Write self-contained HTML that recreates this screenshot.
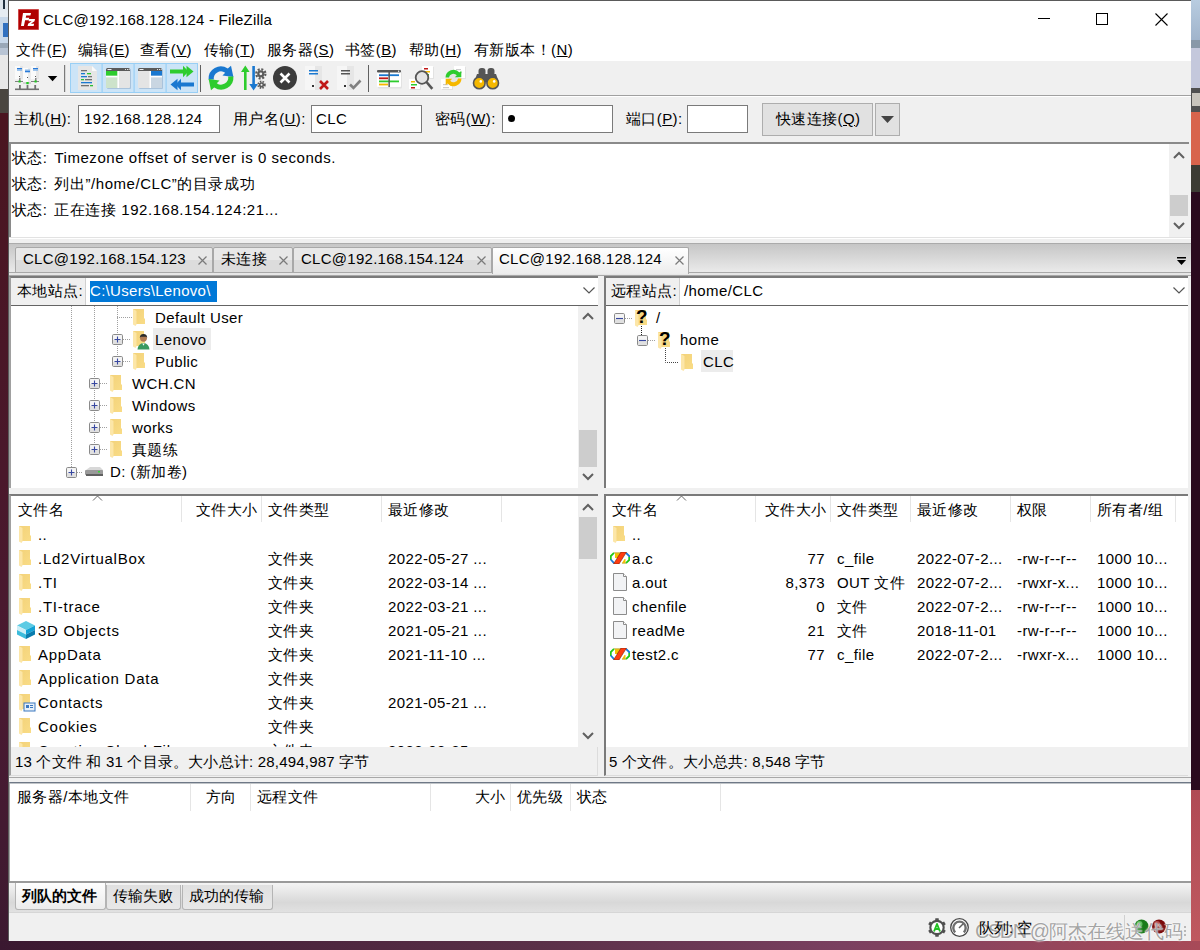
<!DOCTYPE html>
<html><head><meta charset="utf-8">
<style>
*{box-sizing:border-box;margin:0;padding:0}
html,body{width:1200px;height:950px;overflow:hidden;background:#2a0a1e;font-family:"Liberation Sans",sans-serif;font-size:15px;color:#000}
.a{position:absolute}
.t{position:absolute;white-space:nowrap;line-height:18px;letter-spacing:0.4px}
.u{text-decoration:underline}
.lg{margin-left:7px;letter-spacing:0.55px}
#win{position:absolute;left:0;top:0;width:1200px;height:950px}
.sunk{position:absolute;background:#fff;border-top:2px solid #8a8a8a;border-left:2px solid #8a8a8a}
.sb{position:absolute;background:#f0f0f0}
.tab{position:absolute;top:247px;height:26px;border:1px solid #a8a8a8;border-radius:2px 2px 0 0;background:linear-gradient(#e8e8e8 0,#e8e8e8 50%,#dcdcdc 50%,#dcdcdc 100%)}
.tab.act{top:247px;height:27px;border-bottom:none;background:linear-gradient(#ffffff 0,#f6f6f6 50%,#ececec 100%)}
.tt{letter-spacing:0.27px}
.x{position:absolute;top:256px;width:9px;height:9px}
.btab{position:absolute;top:885px;height:25px;border:1px solid #b4b4b4;border-top:none;border-radius:0 0 3px 3px;background:linear-gradient(#e0e0e0,#e8e8e8)}
.btab.act{top:883px;height:27px;background:linear-gradient(#fefefe,#ececec)}
.hdrsep{position:absolute;width:1px;background:#e5e5e5}
</style></head><body>
<!-- desktop strips -->
<div class="a" style="left:0;top:0;width:8px;height:950px;background:linear-gradient(#4a1520 120px,#4a1a32 700px,#3c1a30 950px)"></div>
<div class="a" style="left:0;top:0;width:8px;height:10px;background:#dfe6ee"></div>
<div class="a" style="left:3px;top:0;width:2px;height:9px;background:#203040"></div>
<div class="a" style="left:0;top:10px;width:8px;height:7px;background:#e6ecf2"></div>
<div class="a" style="left:0;top:17px;width:8px;height:26px;background:#c8d8ea"></div>
<div class="a" style="left:3px;top:23px;width:5px;height:14px;background:#3070c0"></div>
<div class="a" style="left:0;top:43px;width:8px;height:5px;background:#9aa8b8"></div>
<div class="a" style="left:0;top:48px;width:8px;height:7px;background:#b8c4d4"></div>
<div class="a" style="left:0;top:55px;width:8px;height:34px;background:#e8e8e8"></div>
<div class="a" style="left:0;top:89px;width:8px;height:24px;background:#4a4640"></div>

<div class="a" style="left:1191px;top:0;width:9px;height:40px;background:linear-gradient(#b8cce0,#a0b4cc)"></div>
<div class="a" style="left:1191px;top:40px;width:9px;height:8px;background:#8898a8"></div>
<div class="a" style="left:1191px;top:48px;width:9px;height:40px;background:#c4c8dc"></div>
<div class="a" style="left:1191px;top:88px;width:9px;height:24px;background:#505050"></div>
<div class="a" style="left:1192px;top:93px;width:8px;height:13px;background:#c8c4bc"></div>
<div class="a" style="left:1191px;top:112px;width:9px;height:53px;background:#d8644c"></div>
<div class="a" style="left:1191px;top:165px;width:9px;height:27px;background:#3c3c34"></div>
<div class="a" style="left:1191px;top:790px;width:9px;height:161px;background:linear-gradient(#b04a55,#c05a60)"></div>
<div class="a" style="left:0;top:941px;width:1200px;height:9px;background:linear-gradient(90deg,#3a1830,#5a3048 45%,#7a4060 70%,#a84a58)"></div>

<div id="win">
 <div class="a" style="left:8px;top:0;width:1183px;height:941px;background:#f0f0f0;border-left:1px solid #5a5a5a;border-top:1px solid #5a5a5a"></div>
 <!-- title + menu (white) -->
 <div class="a" style="left:9px;top:1px;width:1182px;height:60px;background:#fff"></div>
 <svg class="a" style="left:18px;top:9px" width="21" height="21" viewBox="0 0 21 21">
  <rect x="0.5" y="0.5" width="20" height="20" fill="#b00000" stroke="#c01010" stroke-dasharray="1 1"/>
  <path d="M5 4h8l-.6 2.6H8.2l-.5 2.2h3.6l-.6 2.5H7.1L5.9 17H3z" fill="#fff"/>
  <path d="M11 10h6l-.5 2.2-3.6 2.6h3.2L15.6 17H9.6l.5-2.2 3.6-2.6H10.6z" fill="#fff"/>
 </svg>
 <div class="t" style="left:43px;top:11px;letter-spacing:0.2px">CLC@192.168.128.124 - FileZilla</div>
 <div class="a" style="left:1038px;top:18px;width:12px;height:1px;background:#000"></div>
 <div class="a" style="left:1096px;top:13px;width:12px;height:12px;border:1px solid #000"></div>
 <svg class="a" style="left:1155px;top:13px" width="13" height="13"><path d="M0.5 0.5L12.5 12.5M12.5 0.5L0.5 12.5" stroke="#000" stroke-width="1.1"/></svg>

 <div class="t" style="left:16px;top:41px">文件(<span class="u">F</span>)</div>
 <div class="t" style="left:78px;top:41px">编辑(<span class="u">E</span>)</div>
 <div class="t" style="left:140px;top:41px">查看(<span class="u">V</span>)</div>
 <div class="t" style="left:204px;top:41px">传输(<span class="u">T</span>)</div>
 <div class="t" style="left:267px;top:41px">服务器(<span class="u">S</span>)</div>
 <div class="t" style="left:345px;top:41px">书签(<span class="u">B</span>)</div>
 <div class="t" style="left:409px;top:41px">帮助(<span class="u">H</span>)</div>
 <div class="t" style="left:474px;top:41px">有新版本！(<span class="u">N</span>)</div>

 <!-- toolbar -->
 <div class="a" style="left:9px;top:95px;width:1182px;height:1px;background:#a0a0a0"></div>
 <div class="a" style="left:9px;top:96px;width:1182px;height:1px;background:#fff"></div>
 <svg class="a" style="left:0;top:0" width="520" height="100" viewBox="0 0 520 100">
  <!-- server manager -->
  <g>
   <rect x="15" y="66" width="8" height="13" fill="#fafafa"/><rect x="20" y="66" width="3" height="13" fill="#e6e6e6"/>
   <rect x="31" y="66" width="8" height="13" fill="#fafafa"/><rect x="36" y="66" width="3" height="13" fill="#e6e6e6"/>
   <rect x="23" y="68" width="8" height="15" fill="#fcfcfc"/><rect x="28" y="68" width="3" height="15" fill="#ececec"/>
   <rect x="17" y="68" width="5" height="1.4" fill="#2a7ad8"/><rect x="17" y="69.4" width="5" height="1.4" fill="#8ab8e8"/>
   <rect x="33" y="68" width="5" height="1.4" fill="#2a7ad8"/><rect x="33" y="69.4" width="5" height="1.4" fill="#8ab8e8"/>
   <rect x="25" y="69.5" width="5" height="1.4" fill="#8ab8e8"/><rect x="25" y="70.9" width="5" height="1.4" fill="#2a7ad8"/>
   <rect x="19" y="76" width="1" height="1" fill="#555"/><rect x="35" y="76" width="1" height="1" fill="#555"/><rect x="27" y="77" width="1" height="1" fill="#555"/>
   <rect x="19" y="78" width="1.5" height="3" fill="#888"/><rect x="35" y="78" width="1.5" height="3" fill="#888"/>
   <rect x="15" y="81" width="8" height="1" fill="#808080"/><rect x="31" y="81" width="8" height="1" fill="#808080"/><rect x="23" y="82.5" width="8" height="1" fill="#b0b0b0"/>
   <rect x="18.5" y="80.5" width="2.2" height="2" fill="#22cc22"/><rect x="34.5" y="80.5" width="2.2" height="2" fill="#22cc22"/><rect x="26.3" y="82" width="2.4" height="2.2" fill="#22cc22"/>
   <rect x="19" y="85" width="1.8" height="4" fill="#707070"/><rect x="26.6" y="85" width="1.8" height="4" fill="#707070"/><rect x="34.3" y="85" width="1.8" height="4" fill="#707070"/>
   <rect x="15" y="88.5" width="24" height="1.6" fill="#707070"/>
  </g>
  <path d="M47.8 76h9.5l-4.75 5.3z" fill="#000"/>
  <rect x="64" y="65" width="1.2" height="27" fill="#7a7a7a"/>
  <!-- toggle group -->
  <rect x="70.5" y="63.5" width="127" height="29" fill="#cce4f7" stroke="#99cff5"/>
  <rect x="101.5" y="64" width="1.2" height="28" fill="#99cff5"/>
  <rect x="133.5" y="64" width="1.2" height="28" fill="#99cff5"/>
  <rect x="165.5" y="64" width="1.2" height="28" fill="#99cff5"/>
  <!-- log doc -->
  <path d="M78 66h14l5 5v19H78z" fill="#e6e6e6"/><path d="M92 66v5h5z" fill="#fafafa"/>
  <rect x="81" y="70" width="6" height="1.3" fill="#707070"/>
  <rect x="81" y="73" width="4" height="1.3" fill="#1a78d0"/><rect x="87" y="73" width="4" height="1.3" fill="#2ec02e"/>
  <rect x="81" y="76" width="6" height="1.3" fill="#1a78d0"/><rect x="88" y="76" width="4" height="1.3" fill="#707070"/>
  <rect x="81" y="79" width="3" height="1.3" fill="#2ec02e"/><rect x="85" y="79" width="7" height="1.3" fill="#707070"/>
  <rect x="81" y="82" width="11" height="1.3" fill="#1a78d0"/>
  <rect x="81" y="85" width="8" height="1.3" fill="#707070"/><rect x="90" y="85" width="3" height="1.3" fill="#2ec02e"/>
  <!-- local tree icon -->
  <rect x="107" y="69" width="24" height="20" rx="1" fill="#a9c3dc"/>
  <rect x="106" y="68" width="24" height="20" rx="1" fill="#e4e4e4"/>
  <path d="M106 71V69.5a1.5 1.5 0 0 1 1.5-1.5h21a1.5 1.5 0 0 1 1.5 1.5V71z" fill="#5a5a5a"/>
  <rect x="107.5" y="69" width="4" height="0.9" fill="#fff"/><rect x="125" y="69" width="0.9" height="0.9" fill="#fff"/><rect x="127" y="69" width="0.9" height="0.9" fill="#fff"/><rect x="128.7" y="69" width="0.9" height="0.9" fill="#fff"/>
  <rect x="106" y="71" width="11.5" height="4.8" fill="#2ecc2e"/>
  <rect x="106" y="77.3" width="11.5" height="10.7" fill="#cde3cb"/>
  <rect x="106" y="75.8" width="11.5" height="1.5" fill="#fff"/>
  <rect x="117.5" y="71" width="1.5" height="17" fill="#fff"/>
  <!-- remote tree icon -->
  <rect x="139" y="69" width="24" height="20" rx="1" fill="#a9c3dc"/>
  <rect x="138" y="68" width="24" height="20" rx="1" fill="#e4e4e4"/>
  <path d="M138 71V69.5a1.5 1.5 0 0 1 1.5-1.5h21a1.5 1.5 0 0 1 1.5 1.5V71z" fill="#5a5a5a"/>
  <rect x="139.5" y="69" width="4" height="0.9" fill="#fff"/><rect x="157" y="69" width="0.9" height="0.9" fill="#fff"/><rect x="159" y="69" width="0.9" height="0.9" fill="#fff"/><rect x="160.7" y="69" width="0.9" height="0.9" fill="#fff"/>
  <rect x="151" y="71" width="11" height="4.8" fill="#1a78d0"/>
  <rect x="151" y="77.3" width="11" height="10.7" fill="#c9d6e2"/>
  <rect x="151" y="75.8" width="11" height="1.5" fill="#fff"/>
  <rect x="149.5" y="71" width="1.5" height="17" fill="#fff"/>
  <!-- queue arrows -->
  <path d="M170 69.5h13v-3.8l5.5 5.8-5.5 5.8v-3.8h-13z" fill="#2ecc2e"/>
  <path d="M186.5 65.7l7 5.8-7 5.8z" fill="#2ecc2e"/>
  <path d="M194 82.5h-13v-3.8l-5.5 5.8 5.5 5.8v-3.8h13z" fill="#1a78d0"/>
  <path d="M177.5 78.7l-7 5.8 7 5.8z" fill="#1a78d0"/>
  <rect x="200" y="65" width="1" height="27" fill="#606060"/>
  <!-- refresh -->
  <path d="M208.6 79.5A12.2 12.2 0 0 1 227.8 68.6L231 65.8l2.4 11.2-10.9-1.4 2.7-2.8A7.2 7.2 0 0 0 213.8 79.5z" fill="#1a78d0"/>
  <path d="M233.4 76.5A12.2 12.2 0 0 1 214.2 87.4L211 90.2l-2.4-11.2 10.9 1.4-2.7 2.8A7.2 7.2 0 0 0 228.2 76.5z" fill="#2ecc2e"/>
  <!-- process queue -->
  <path d="M244 90V72h-3l4.3-6.5 4.3 6.5h-3v18z" fill="#2ecc2e"/>
  <path d="M252.3 66v18h-3l4.3 6.5 4.3-6.5h-3V66z" fill="#1a78d0"/>
  <circle cx="260.8" cy="73.8" r="4.6" fill="none" stroke="#5a5a5a" stroke-width="2.2" stroke-dasharray="2 1.6"/>
  <circle cx="260.8" cy="73.8" r="3.6" fill="#5a5a5a"/><circle cx="260.8" cy="73.8" r="1.4" fill="#f0f0f0"/>
  <circle cx="261.5" cy="84.8" r="3.3" fill="none" stroke="#5a5a5a" stroke-width="1.8" stroke-dasharray="1.5 1.2"/>
  <circle cx="261.5" cy="84.8" r="2.6" fill="#5a5a5a"/><circle cx="261.5" cy="84.8" r="1" fill="#f0f0f0"/>
  <!-- cancel -->
  <circle cx="285" cy="78" r="12" fill="#3c3c3c"/>
  <path d="M280.5 73.5l9 9M289.5 73.5l-9 9" stroke="#fff" stroke-width="2.6"/>
  <!-- disconnect -->
  <rect x="305" y="66" width="17" height="24" fill="#f6f6f6"/><rect x="315" y="66" width="7" height="24" fill="#e6e6e6"/>
  <rect x="309" y="70" width="9" height="1.5" fill="#1a78d0"/><rect x="309" y="73" width="9" height="1.5" fill="#1a78d0"/>
  <rect x="312" y="85" width="2" height="2" fill="#333"/>
  <path d="M320 81l8 8M328 81l-8 8" stroke="#c01818" stroke-width="2.6"/>
  <!-- reconnect -->
  <rect x="337" y="66" width="17" height="24" fill="#f6f6f6"/><rect x="347" y="66" width="7" height="24" fill="#e6e6e6"/>
  <rect x="341" y="70" width="9" height="1.5" fill="#555"/><rect x="341" y="73" width="9" height="1.5" fill="#555"/>
  <rect x="344" y="85" width="2" height="2" fill="#333"/>
  <path d="M350 84.5l3.5 3.5 7-7.5" fill="none" stroke="#808080" stroke-width="2.6"/>
  <rect x="368" y="65" width="1" height="27" fill="#606060"/>
  <!-- filter -->
  <rect x="378" y="71.5" width="24" height="17" rx="1" fill="#d8d8d8" opacity=".6"/>
  <rect x="377" y="70" width="24" height="17" rx="1" fill="#fff"/>
  <rect x="377" y="70" width="24" height="2.4" rx="1" fill="#555"/><rect x="398" y="70.6" width="1.2" height="1.2" fill="#fff"/>
  <rect x="379" y="74.3" width="20" height="1.8" fill="#1a78d0"/>
  <rect x="379" y="77.4" width="9" height="1.8" fill="#c01818"/>
  <rect x="379" y="80.5" width="20" height="1.8" fill="#2ecc2e"/>
  <rect x="379" y="83.6" width="9" height="1.8" fill="#f5b800"/>
  <rect x="388.4" y="72" width="1.5" height="15" fill="#555"/>
  <!-- search -->
  <rect x="423" y="67" width="11" height="12" fill="#d8d8d8" opacity=".6"/>
  <rect x="422" y="66" width="11" height="12" fill="#fff"/>
  <rect x="424" y="68" width="4" height="1.5" fill="#c01818"/><rect x="424" y="71" width="6" height="1.5" fill="#f5b800"/><rect x="424" y="74" width="5" height="1.5" fill="#2ecc2e"/>
  <rect x="410" y="80" width="11" height="10" fill="#d8d8d8" opacity=".6"/>
  <rect x="409" y="79" width="11" height="10" fill="#fff"/>
  <rect x="411" y="81" width="4" height="1.5" fill="#f5b800"/><rect x="411" y="84" width="6" height="1.5" fill="#2ecc2e"/><rect x="411" y="87" width="4" height="1.5" fill="#c01818"/>
  <circle cx="422" cy="77.5" r="6.3" fill="#e4e4e4" stroke="#555" stroke-width="1.8"/>
  <path d="M426.5 82l5.8 6.8" stroke="#555" stroke-width="2.6"/>
  <!-- sync -->
  <rect x="455" y="67" width="11" height="12" fill="#d8d8d8" opacity=".6"/>
  <rect x="454" y="66" width="11" height="12" fill="#fff"/>
  <rect x="456" y="69" width="5" height="1.2" fill="#ccc"/><rect x="456" y="72" width="6" height="1.2" fill="#ccc"/>
  <rect x="442" y="80" width="11" height="10" fill="#d8d8d8" opacity=".6"/>
  <rect x="441" y="79" width="11" height="10" fill="#fff"/>
  <rect x="443" y="84" width="5" height="1.2" fill="#ccc"/><rect x="443" y="87" width="6" height="1.2" fill="#ccc"/>
  <circle cx="453.5" cy="78" r="5" fill="#e4e4e4"/>
  <path d="M445.5 77.5a8 8 0 0 1 14-5l1.8-1.8v6.5h-6.5l2-2a4.6 4.6 0 0 0-7.9 2.3z" fill="#2ecc2e"/>
  <path d="M461.5 78.5a8 8 0 0 1-14 5l-1.8 1.8v-6.5h6.5l-2 2a4.6 4.6 0 0 0 7.9-2.3z" fill="#f5b800"/>
  <!-- binoculars -->
  <rect x="478.5" y="68" width="7" height="8" rx="3" fill="#555"/>
  <rect x="487.5" y="68" width="7" height="8" rx="3" fill="#555"/>
  <path d="M477 74h19l3 8.5h-25z" fill="#555"/>
  <circle cx="479.3" cy="83" r="5.8" fill="#f5b800" stroke="#555" stroke-width="1.6"/>
  <circle cx="492.7" cy="83" r="5.8" fill="#f5b800" stroke="#555" stroke-width="1.6"/>
  <circle cx="480.8" cy="81.4" r="1.3" fill="#fff"/><circle cx="494.2" cy="81.4" r="1.3" fill="#fff"/>
 </svg>


 <!-- quickconnect -->
 <div class="t" style="left:14px;top:110px">主机(<span class="u">H</span>):</div>
 <div class="a" style="left:78px;top:105px;width:142px;height:28px;background:#fff;border:1px solid #7a7a7a"></div>
 <div class="t" style="left:84px;top:110px">192.168.128.124</div>
 <div class="t" style="left:233px;top:110px">用户名(<span class="u">U</span>):</div>
 <div class="a" style="left:311px;top:105px;width:111px;height:28px;background:#fff;border:1px solid #7a7a7a"></div>
 <div class="t" style="left:316px;top:110px">CLC</div>
 <div class="t" style="left:435px;top:110px">密码(<span class="u">W</span>):</div>
 <div class="a" style="left:502px;top:105px;width:111px;height:28px;background:#fff;border:1px solid #7a7a7a"></div>
 <div class="a" style="left:508px;top:115px;width:7px;height:7px;border-radius:50%;background:#000"></div>
 <div class="t" style="left:626px;top:110px">端口(<span class="u">P</span>):</div>
 <div class="a" style="left:687px;top:105px;width:61px;height:28px;background:#fff;border:1px solid #7a7a7a"></div>
 <div class="a" style="left:762px;top:103px;width:111px;height:33px;background:#e1e1e1;border:1px solid #adadad"></div>
 <div class="t" style="left:776px;top:110px">快速连接(<span class="u">Q</span>)</div>
 <div class="a" style="left:875px;top:103px;width:25px;height:33px;background:#e1e1e1;border:1px solid #adadad"></div>
 <svg class="a" style="left:881px;top:116px" width="13" height="7"><path d="M0 0h13L6.5 7z" fill="#444"/></svg>

 <!-- log -->
 <div class="sunk" style="left:9px;top:142px;width:1180px;height:96px"></div>
 <div class="t" style="left:12px;top:149px">状态:<span class="lg">Timezone offset of server is 0 seconds.</span></div>
 <div class="t" style="left:12px;top:175px">状态:<span class="lg">列出”/home/CLC”的目录成功</span></div>
 <div class="t" style="left:12px;top:201px">状态:<span class="lg">正在连接 192.168.154.124:21...</span></div>
 <div class="sb" style="left:1169px;top:144px;width:20px;height:93px"></div>
 <div class="a" style="left:1170px;top:195px;width:18px;height:21px;background:#cdcdcd"></div>
 <svg class="a" style="left:1173px;top:151px" width="12" height="8"><path d="M1 7l5-5 5 5" fill="none" stroke="#606060" stroke-width="2"/></svg>
 <svg class="a" style="left:1173px;top:222px" width="12" height="8"><path d="M1 1l5 5 5-5" fill="none" stroke="#606060" stroke-width="2"/></svg>

 <!-- tab bar -->
 <div class="a" style="left:9px;top:244px;width:1182px;height:28px;background:linear-gradient(#c6c6c6,#eaeaea)"></div>
 <div class="a" style="left:9px;top:237px;width:1182px;height:6px;background:#efefef;border-top:1px solid #e2e2e2;box-shadow:inset 0 1px 0 #fff"></div>
 <div class="a" style="left:9px;top:243px;width:1182px;height:1px;background:#ababab"></div>
 <div class="a" style="left:9px;top:272px;width:1182px;height:1px;background:#a8a8a8"></div>
 <div class="a" style="left:9px;top:273px;width:1182px;height:3px;background:#e6e6e6;border-bottom:1px solid #a8a8a8"></div>
 <div class="tab" style="left:15px;width:198px"></div>
 <div class="t tt" style="left:23px;top:250px">CLC@192.168.154.123</div><svg class="x" style="left:198px" width="9" height="9"><path d="M0.5 0.5l8 8M8.5 0.5l-8 8" stroke="#7a7a7a" stroke-width="1.2"/></svg>
 <div class="tab" style="left:213px;width:80px"></div>
 <div class="t tt" style="left:221px;top:250px">未连接</div><svg class="x" style="left:279px" width="9" height="9"><path d="M0.5 0.5l8 8M8.5 0.5l-8 8" stroke="#7a7a7a" stroke-width="1.2"/></svg>
 <div class="tab" style="left:293px;width:199px"></div>
 <div class="t tt" style="left:301px;top:250px">CLC@192.168.154.124</div><svg class="x" style="left:477px" width="9" height="9"><path d="M0.5 0.5l8 8M8.5 0.5l-8 8" stroke="#7a7a7a" stroke-width="1.2"/></svg>
 <div class="tab act" style="left:492px;width:197px"></div>
 <div class="t tt" style="left:499px;top:250px">CLC@192.168.128.124</div><svg class="x" style="left:675px" width="9" height="9"><path d="M0.5 0.5l8 8M8.5 0.5l-8 8" stroke="#7a7a7a" stroke-width="1.2"/></svg>
 <svg class="a" style="left:1177px;top:257px" width="9" height="8"><rect x="0" y="0" width="9" height="1.5" fill="#000"/><path d="M0 3h9L4.5 8z" fill="#000"/></svg>

 <!-- local site -->
 <div class="a" style="left:9px;top:276px;width:589px;height:212px;background:#fff;border-top:2px solid #7a7a7a;border-left:2px solid #a0a0a0"></div>
 <div class="a" style="left:11px;top:278px;width:75px;height:28px;background:#f0f0f0;border-right:1px solid #d0d0d0"></div>
 <div class="a" style="left:11px;top:305px;width:587px;height:1px;background:#646464"></div>
 <div class="t" style="left:17px;top:282px">本地站点:</div>
 <div class="a" style="left:90px;top:281px;width:127px;height:21px;background:#0078d7"></div>
 <div class="t" style="left:90px;top:282px;color:#fff;letter-spacing:0.3px">C:\Users\Lenovo\</div>
 <svg class="a" style="left:583px;top:287px" width="12" height="7"><path d="M0.5 0.5l5.5 5.5 5.5-5.5" fill="none" stroke="#555" stroke-width="1.2"/></svg>
 <!-- local tree -->
 <div class="a" style="left:153px;top:328px;width:58px;height:22px;background:#ececec"></div>

 <svg width="0" height="0" style="position:absolute">
  <defs>
   <symbol id="fold" viewBox="0 0 12 17"><linearGradient id="fg" x1="0" y1="0" x2="1" y2="1"><stop offset="0" stop-color="#f3d27a"/><stop offset="1" stop-color="#f9dc86"/></linearGradient><path d="M0 0h11v9.5h1V15H0z" fill="url(#fg)"/><path d="M0 0l3.5 2v13.5l-1 1.5L0 15.5z" fill="#fce6a8"/></symbol>
   <symbol id="exp" viewBox="0 0 11 11"><rect x="0.5" y="0.5" width="10" height="10" rx="1.2" fill="#f4f4f4" stroke="#8a8a8a"/><rect x="1" y="6" width="9" height="4" fill="#e0e0e0"/><path d="M2.5 5.5h6M5.5 2.5v6" stroke="#3848a0" stroke-width="1.1"/></symbol>
   <symbol id="col" viewBox="0 0 11 11"><rect x="0.5" y="0.5" width="10" height="10" rx="1.2" fill="#f4f4f4" stroke="#8a8a8a"/><rect x="1" y="6" width="9" height="4" fill="#e0e0e0"/><path d="M2 5.5h7" stroke="#3848a0" stroke-width="1.1"/></symbol>
   <symbol id="cfile" viewBox="0 0 20 12"><path d="M4 0.8h12l3.2 3.2v4l-3.2 3.2H4L0.8 8V4z" fill="#fff"/><path d="M5 1h6L8 6H5z" fill="#f5c000"/><path d="M12 11h3.5V7h-1z" fill="#f5c000"/><path d="M0.8 8V4L4 0.8" fill="none" stroke="#22c81a" stroke-width="1.8"/><path d="M0.8 7.5L4 11.2" fill="none" stroke="#1a7ad8" stroke-width="1.8"/><path d="M16 0.8l3.2 3.2v1" fill="none" stroke="#1a7ad8" stroke-width="1.8"/><path d="M19.2 5v3L16 11.2" fill="none" stroke="#22c81a" stroke-width="1.8"/><path d="M4 0.8h7M12 11.2h4" stroke="#c8b040" stroke-width="1"/><path d="M3.5 12h5.5L16.5 0H11z" fill="#ff3c10" stroke="#702010" stroke-width="0.6"/></symbol>
   <symbol id="doc" viewBox="0 0 14 18"><path d="M0.5 0.5h10l3 3v14h-13z" fill="#f2f3f5" stroke="#8c8c8c"/><path d="M10.5 0.5v3h3" fill="#fff" stroke="#8c8c8c"/></symbol>
  </defs>
 </svg>

<svg class="a" style="left:0;top:0" width="600" height="500">
<path d="M71.5 306V467" stroke="#a0a0a0" stroke-dasharray="1 1"/>
<path d="M94.5 306V449" stroke="#a0a0a0" stroke-dasharray="1 1"/>
<path d="M117.5 306V356" stroke="#a0a0a0" stroke-dasharray="1 1"/>
<path d="M117 317.5H132" stroke="#a0a0a0" stroke-dasharray="1 1"/>
<use href="#fold" x="133" y="309" width="12" height="17"/>
<use href="#exp" x="112" y="334" width="11" height="11"/>
<path d="M123 339.5H130" stroke="#a0a0a0" stroke-dasharray="1 1"/>
<use href="#fold" x="133" y="331" width="12" height="17"/>
<use href="#exp" x="112" y="356" width="11" height="11"/>
<path d="M123 361.5H130" stroke="#a0a0a0" stroke-dasharray="1 1"/>
<use href="#fold" x="133" y="353" width="12" height="17"/>
<use href="#exp" x="89" y="378" width="11" height="11"/>
<path d="M100 383.5H107" stroke="#a0a0a0" stroke-dasharray="1 1"/>
<use href="#fold" x="110" y="375" width="12" height="17"/>
<use href="#exp" x="89" y="400" width="11" height="11"/>
<path d="M100 405.5H107" stroke="#a0a0a0" stroke-dasharray="1 1"/>
<use href="#fold" x="110" y="397" width="12" height="17"/>
<use href="#exp" x="89" y="422" width="11" height="11"/>
<path d="M100 427.5H107" stroke="#a0a0a0" stroke-dasharray="1 1"/>
<use href="#fold" x="110" y="419" width="12" height="17"/>
<use href="#exp" x="89" y="444" width="11" height="11"/>
<path d="M100 449.5H107" stroke="#a0a0a0" stroke-dasharray="1 1"/>
<use href="#fold" x="110" y="441" width="12" height="17"/>
<use href="#exp" x="66" y="467" width="11" height="11"/>
<path d="M77 472.5H83" stroke="#a0a0a0" stroke-dasharray="1 1"/>
<path d="M86 470l4-3h10l3 3v4h-17z" fill="#d8d8d8"/><rect x="85" y="470" width="18" height="5" rx="1" fill="#9a9a9a"/><rect x="86" y="474" width="17" height="2" fill="#606060"/><rect x="98" y="471" width="2" height="1.5" fill="#3ad83a"/>
<path d="M137.5 349.5a6 6.5 0 0 1 12 0z" fill="#3a9a60"/><path d="M142.3 343.5l1.2 2.2 1.2-2.2z" fill="#fff"/><circle cx="143.5" cy="338.3" r="3.4" fill="#b07a52"/><path d="M139.8 338a3.7 4 0 0 1 7.4 0l-1-1.3h-5.4z" fill="#2a2a2a"/>
</svg>
<div class="t" style="left:155px;top:309px">Default User</div>
<div class="t" style="left:155px;top:331px">Lenovo</div>
<div class="t" style="left:155px;top:353px">Public</div>
<div class="t" style="left:132px;top:375px">WCH.CN</div>
<div class="t" style="left:132px;top:397px">Windows</div>
<div class="t" style="left:132px;top:419px">works</div>
<div class="t" style="left:132px;top:441px">真题练</div>
<div class="t" style="left:110px;top:463px">D: (新加卷)</div>
 <div class="sb" style="left:578px;top:306px;width:20px;height:182px"></div>
 <div class="a" style="left:579px;top:430px;width:18px;height:37px;background:#cdcdcd"></div>
 <svg class="a" style="left:582px;top:312px" width="12" height="8"><path d="M1 7l5-5 5 5" fill="none" stroke="#606060" stroke-width="2"/></svg>
 <svg class="a" style="left:582px;top:473px" width="12" height="8"><path d="M1 1l5 5 5-5" fill="none" stroke="#606060" stroke-width="2"/></svg>

 <!-- remote site -->
 <div class="a" style="left:604px;top:276px;width:584px;height:212px;background:#fff;border-top:2px solid #7a7a7a;border-left:2px solid #7a7a7a"></div>
 <div class="a" style="left:606px;top:278px;width:74px;height:28px;background:#f0f0f0;border-right:1px solid #d0d0d0"></div>
 <div class="a" style="left:606px;top:305px;width:582px;height:1px;background:#646464"></div>
 <div class="t" style="left:611px;top:282px">远程站点:</div>
 <div class="t" style="left:684px;top:282px">/home/CLC</div>
 <svg class="a" style="left:1173px;top:287px" width="12" height="7"><path d="M0.5 0.5l5.5 5.5 5.5-5.5" fill="none" stroke="#555" stroke-width="1.2"/></svg>
<svg class="a" style="left:0;top:0" width="1200" height="500">
<path d="M625 318.5H633" stroke="#a0a0a0" stroke-dasharray="1 1"/>
<path d="M641.5 326V335" stroke="#222" stroke-dasharray="1 1"/>
<path d="M648 340.5H656" stroke="#a0a0a0" stroke-dasharray="1 1"/>
<path d="M665.5 348V362.5H678" stroke="#444" stroke-dasharray="1 1" fill="none"/>
<use href="#col" x="614" y="313" width="11" height="11"/>
<use href="#col" x="637" y="335" width="11" height="11"/>
<use href="#fold" x="635" y="310" width="12" height="17"/>
<use href="#fold" x="658" y="332" width="12" height="17"/>
<use href="#fold" x="681" y="354" width="12" height="17"/>
<text x="636" y="323" font-family="Liberation Sans" font-weight="bold" font-size="19">?</text>
<text x="659" y="345" font-family="Liberation Sans" font-weight="bold" font-size="19">?</text>
</svg>
<div class="a" style="left:701px;top:350px;width:32px;height:22px;background:#ececec"></div>
<div class="t" style="left:656px;top:309px">/</div>
<div class="t" style="left:680px;top:331px">home</div>
<div class="t" style="left:703px;top:353px">CLC</div>

 <!-- local list -->
 <div class="a" style="left:9px;top:494px;width:589px;height:253px;background:#fff;border-top:2px solid #7a7a7a;border-left:2px solid #a0a0a0"></div>
<svg class="a" style="left:0;top:0" width="600" height="760">
<use href="#fold" x="19" y="526" width="12" height="17"/>
<use href="#fold" x="19" y="550" width="12" height="17"/>
<use href="#fold" x="19" y="574" width="12" height="17"/>
<use href="#fold" x="19" y="598" width="12" height="17"/>
<path d="M17 625.5l9-4.5 9 4.5-9 4.5z" fill="#5ccbe4"/><path d="M17 625.5l9 4.5v4.5l-9-4.5z" fill="#cdeef6"/><path d="M17 630l9 4.5v4.5l-9-4.5z" fill="#3cbcdc"/><path d="M26 630l9-4.5v4.5l-9 4.5z" fill="#12a2d6"/><path d="M26 634.5l9-4.5v4.5l-9 4.5z" fill="#0a7cae"/>
<use href="#fold" x="19" y="646" width="12" height="17"/>
<use href="#fold" x="19" y="670" width="12" height="17"/>
<use href="#fold" x="19" y="694" width="12" height="17"/>
<rect x="24" y="703" width="11" height="8" fill="#e8f0f8" stroke="#3a78c0"/><rect x="26" y="705" width="3" height="3" fill="#3a78c0"/><rect x="30" y="705" width="3" height="1" fill="#3a78c0"/><rect x="30" y="707" width="3" height="1" fill="#3a78c0"/>
<use href="#fold" x="19" y="718" width="12" height="17"/>
<use href="#fold" x="19" y="742" width="12" height="17"/>
</svg>
<div class="t" style="left:18px;top:501px">文件名</div>
<svg class="a" style="left:92px;top:495px" width="11" height="6"><path d="M1 5.5l4.5-4.5 4.5 4.5" fill="none" stroke="#666" stroke-width="1"/></svg>
<div class="hdrsep" style="left:181px;top:496px;height:26px"></div>
<div class="hdrsep" style="left:261px;top:496px;height:26px"></div>
<div class="hdrsep" style="left:381px;top:496px;height:26px"></div>
<div class="hdrsep" style="left:501px;top:496px;height:26px"></div>
<div class="t" style="left:196px;top:501px">文件大小</div>
<div class="t" style="left:268px;top:501px">文件类型</div>
<div class="t" style="left:388px;top:501px">最近修改</div>
<div class="t" style="left:38px;top:526px">..</div>
<div class="t" style="left:38px;top:550px;letter-spacing:0.75px">.Ld2VirtualBox</div>
<div class="t" style="left:268px;top:550px">文件夹</div>
<div class="t" style="left:388px;top:550px">2022-05-27 ...</div>
<div class="t" style="left:38px;top:574px;letter-spacing:0.75px">.TI</div>
<div class="t" style="left:268px;top:574px">文件夹</div>
<div class="t" style="left:388px;top:574px">2022-03-14 ...</div>
<div class="t" style="left:38px;top:598px;letter-spacing:0.75px">.TI-trace</div>
<div class="t" style="left:268px;top:598px">文件夹</div>
<div class="t" style="left:388px;top:598px">2022-03-21 ...</div>
<div class="t" style="left:38px;top:622px;letter-spacing:0.75px">3D Objects</div>
<div class="t" style="left:268px;top:622px">文件夹</div>
<div class="t" style="left:388px;top:622px">2021-05-21 ...</div>
<div class="t" style="left:38px;top:646px;letter-spacing:0.75px">AppData</div>
<div class="t" style="left:268px;top:646px">文件夹</div>
<div class="t" style="left:388px;top:646px">2021-11-10 ...</div>
<div class="t" style="left:38px;top:670px;letter-spacing:0.75px">Application Data</div>
<div class="t" style="left:268px;top:670px">文件夹</div>
<div class="t" style="left:38px;top:694px;letter-spacing:0.75px">Contacts</div>
<div class="t" style="left:268px;top:694px">文件夹</div>
<div class="t" style="left:388px;top:694px">2021-05-21 ...</div>
<div class="t" style="left:38px;top:718px;letter-spacing:0.75px">Cookies</div>
<div class="t" style="left:268px;top:718px">文件夹</div>
<div class="t" style="left:38px;top:742px;letter-spacing:0.75px">Creative Cloud Files</div>
<div class="t" style="left:268px;top:742px">文件夹</div>
<div class="t" style="left:388px;top:742px">2022-03-25 ...</div>
 <div class="sb" style="left:578px;top:496px;width:20px;height:251px"></div>
 <div class="a" style="left:579px;top:517px;width:18px;height:42px;background:#cdcdcd"></div>
 <svg class="a" style="left:582px;top:503px" width="12" height="8"><path d="M1 7l5-5 5 5" fill="none" stroke="#606060" stroke-width="2"/></svg>
 <svg class="a" style="left:582px;top:732px" width="12" height="8"><path d="M1 1l5 5 5-5" fill="none" stroke="#606060" stroke-width="2"/></svg>
 <div class="a" style="left:9px;top:747px;width:589px;height:29px;background:#f0f0f0;border-left:2px solid #a0a0a0;border-right:1px solid #dcdcdc;border-bottom:1px solid #dcdcdc"></div>
 <div class="t" style="left:15px;top:753px;letter-spacing:0.2px">13 个文件 和 31 个目录。大小总计: 28,494,987 字节</div>

 <!-- remote list -->
 <div class="a" style="left:604px;top:494px;width:584px;height:253px;background:#fff;border-top:2px solid #7a7a7a;border-left:2px solid #7a7a7a"></div>
<svg class="a" style="left:0;top:0" width="1200" height="760">
<use href="#fold" x="613" y="526" width="12" height="17"/>
<use href="#cfile" x="610" y="552" width="20" height="12"/>
<use href="#doc" x="613" y="573" width="14" height="18"/>
<use href="#doc" x="613" y="597" width="14" height="18"/>
<use href="#doc" x="613" y="621" width="14" height="18"/>
<use href="#cfile" x="610" y="648" width="20" height="12"/>
</svg>
<div class="t" style="left:612px;top:501px">文件名</div>
<svg class="a" style="left:676px;top:495px" width="11" height="6"><path d="M1 5.5l4.5-4.5 4.5 4.5" fill="none" stroke="#666" stroke-width="1"/></svg>
<div class="hdrsep" style="left:755px;top:496px;height:26px"></div>
<div class="hdrsep" style="left:830px;top:496px;height:26px"></div>
<div class="hdrsep" style="left:910px;top:496px;height:26px"></div>
<div class="hdrsep" style="left:1010px;top:496px;height:26px"></div>
<div class="hdrsep" style="left:1090px;top:496px;height:26px"></div>
<div class="hdrsep" style="left:1175px;top:496px;height:26px"></div>
<div class="t" style="left:765px;top:501px">文件大小</div>
<div class="t" style="left:837px;top:501px">文件类型</div>
<div class="t" style="left:917px;top:501px">最近修改</div>
<div class="t" style="left:1017px;top:501px">权限</div>
<div class="t" style="left:1097px;top:501px">所有者/组</div>
<div class="t" style="left:632px;top:526px">..</div>
<div class="t" style="left:632px;top:550px">a.c</div>
<div class="t" style="right:375px;top:550px">77</div>
<div class="t" style="left:837px;top:550px">c_file</div>
<div class="t" style="left:917px;top:550px">2022-07-2...</div>
<div class="t" style="left:1017px;top:550px">-rw-r--r--</div>
<div class="t" style="left:1097px;top:550px">1000 10...</div>
<div class="t" style="left:632px;top:574px">a.out</div>
<div class="t" style="right:375px;top:574px">8,373</div>
<div class="t" style="left:837px;top:574px">OUT 文件</div>
<div class="t" style="left:917px;top:574px">2022-07-2...</div>
<div class="t" style="left:1017px;top:574px">-rwxr-x...</div>
<div class="t" style="left:1097px;top:574px">1000 10...</div>
<div class="t" style="left:632px;top:598px">chenfile</div>
<div class="t" style="right:375px;top:598px">0</div>
<div class="t" style="left:837px;top:598px">文件</div>
<div class="t" style="left:917px;top:598px">2022-07-2...</div>
<div class="t" style="left:1017px;top:598px">-rw-r--r--</div>
<div class="t" style="left:1097px;top:598px">1000 10...</div>
<div class="t" style="left:632px;top:622px">readMe</div>
<div class="t" style="right:375px;top:622px">21</div>
<div class="t" style="left:837px;top:622px">文件</div>
<div class="t" style="left:917px;top:622px">2018-11-01</div>
<div class="t" style="left:1017px;top:622px">-rw-r--r--</div>
<div class="t" style="left:1097px;top:622px">1000 10...</div>
<div class="t" style="left:632px;top:646px">test2.c</div>
<div class="t" style="right:375px;top:646px">77</div>
<div class="t" style="left:837px;top:646px">c_file</div>
<div class="t" style="left:917px;top:646px">2022-07-2...</div>
<div class="t" style="left:1017px;top:646px">-rwxr-x...</div>
<div class="t" style="left:1097px;top:646px">1000 10...</div>
 <div class="a" style="left:604px;top:747px;width:584px;height:29px;background:#f0f0f0;border-left:2px solid #7a7a7a;border-bottom:1px solid #dcdcdc"></div>
 <div class="t" style="left:609px;top:753px;letter-spacing:0.2px">5 个文件。大小总共: 8,548 字节</div>

 <!-- queue -->
 <div class="a" style="left:9px;top:777px;width:1182px;height:1px;background:#a8a8a8"></div>
 <div class="a" style="left:9px;top:782px;width:1182px;height:100px;background:#fff;border-top:1px solid #6e7886;border-left:1px solid #a0a0a0;box-shadow:inset 0 1px 0 #c0c4c8"></div>
 <div class="t" style="left:17px;top:788px">服务器/本地文件</div>
 <div class="hdrsep" style="left:190px;top:784px;height:27px"></div>
 <div class="t" style="left:206px;top:788px">方向</div>
 <div class="hdrsep" style="left:250px;top:784px;height:27px"></div>
 <div class="t" style="left:257px;top:788px">远程文件</div>
 <div class="hdrsep" style="left:430px;top:784px;height:27px"></div>
 <div class="t" style="left:475px;top:788px">大小</div>
 <div class="hdrsep" style="left:510px;top:784px;height:27px"></div>
 <div class="t" style="left:517px;top:788px">优先级</div>
 <div class="hdrsep" style="left:570px;top:784px;height:27px"></div>
 <div class="t" style="left:577px;top:788px">状态</div>
 <div class="hdrsep" style="left:720px;top:784px;height:27px"></div>
 <div class="a" style="left:9px;top:881px;width:1182px;height:2px;background:#9a9a9a"></div>

 <!-- bottom tabs -->
 <div class="a" style="left:9px;top:883px;width:1182px;height:30px;background:linear-gradient(#f4f4f4,#d8d8d8 65%,#e2e2e2)"></div>
 <div class="btab act" style="left:15px;width:91px"></div>
 <div class="t" style="left:22px;top:887px;font-weight:bold;letter-spacing:0">列队的文件</div>
 <div class="btab" style="left:106px;width:75px"></div>
 <div class="t" style="left:113px;top:887px;letter-spacing:0">传输失败</div>
 <div class="btab" style="left:182px;width:91px"></div>
 <div class="t" style="left:189px;top:887px;letter-spacing:0">成功的传输</div>
 <div class="a" style="left:9px;top:912px;width:1182px;height:1px;background:#d6d6d6"></div>
 <!-- status bar -->
 <div class="a" style="left:1124px;top:916px;width:1px;height:22px;background:#d0d0d0"></div>
 <svg class="a" style="left:920px;top:912px" width="280" height="38" viewBox="920 912 280 38">
  <path d="M933.17 920.82 L935.17 920.02 L935.34 918.35 L938.66 918.35 L938.83 920.02 L940.83 920.82 L940.87 920.85 L942.56 922.18 L944.09 921.48 L945.76 924.37 L944.39 925.35 L944.70 927.47 L944.70 927.53 L944.39 929.65 L945.76 930.63 L944.09 933.52 L942.56 932.82 L940.87 934.15 L940.83 934.18 L938.83 934.98 L938.66 936.65 L935.34 936.65 L935.17 934.98 L933.17 934.18 L933.13 934.15 L931.44 932.82 L929.91 933.52 L928.24 930.63 L929.61 929.65 L929.30 927.53 L929.30 927.47 L929.61 925.35 L928.24 924.37 L929.91 921.48 L931.44 922.18 L933.13 920.85Z" fill="#505050"/>
  <circle cx="937" cy="927.5" r="5.6" fill="#fff"/>
  <path d="M934 931.5l3-7.5 3 7.5M935.1 929h3.8" fill="none" stroke="#22c022" stroke-width="1.9" stroke-linejoin="round"/>
  <circle cx="959.5" cy="927.5" r="8.8" fill="#fff" stroke="#4a4a4a" stroke-width="1.3"/>
  <path d="M955.2 932.3A6.2 6.2 0 1 1 963.8 932.3" fill="none" stroke="#707070" stroke-width="2.4"/>
  <path d="M959 928l4.2-4.2" stroke="#606060" stroke-width="1.5"/>
  <line x1="1124.5" y1="915" x2="1124.5" y2="941" stroke="#d0d0d0"/>
  <circle cx="1141.5" cy="926.5" r="7" fill="#1a7a1a"/><circle cx="1139.5" cy="924" r="3" fill="#7ad87a" opacity=".7"/>
  <circle cx="1159" cy="926.5" r="7" fill="#7a0a0a"/><circle cx="1157" cy="924" r="3" fill="#d87a7a" opacity=".6"/>
  <g fill="#b8b8b8"><rect x="1184" y="926" width="2" height="2"/><rect x="1184" y="930" width="2" height="2"/><rect x="1184" y="934" width="2" height="2"/><rect x="1180" y="930" width="2" height="2"/><rect x="1180" y="934" width="2" height="2"/><rect x="1176" y="934" width="2" height="2"/></g>
 </svg>
 
 <div class="a" style="left:975px;top:918px;white-space:nowrap;font-size:20px;line-height:26px;color:rgba(140,140,140,0.8);text-shadow:0 0 2px #fff,0 0 1px #fff"><span style="letter-spacing:-1.5px">CSDN @</span><span style="font-size:19px;letter-spacing:0.2px">阿杰在线送代码</span></div>
 <div class="t" style="left:979px;top:919px;letter-spacing:0">队列: 空</div>


</div>
</body></html>
